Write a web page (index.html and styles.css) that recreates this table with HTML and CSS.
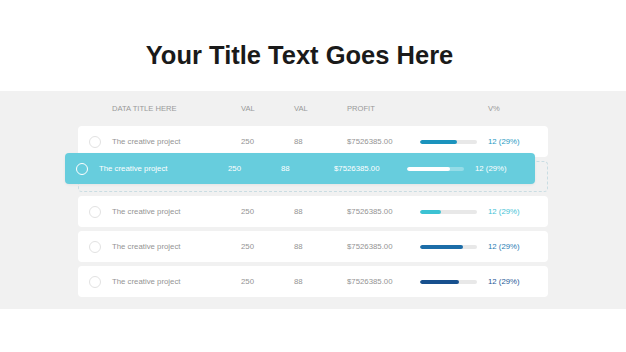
FILE: index.html
```html
<!DOCTYPE html>
<html>
<head>
<meta charset="utf-8">
<link rel="stylesheet" href="styles.css">
</head>
<body>
<header class="top">
  <h1 class="title">Your Title Text Goes Here</h1>
</header>
<section class="band">
  <div class="table">
    <div class="grid head">
      <span></span>
      <span>DATA TITLE HERE</span>
      <span>VAL</span>
      <span>VAL</span>
      <span>PROFIT</span>
      <span></span>
      <span>V%</span>
    </div>
    <div class="grid row">
      <span class="dot"></span>
      <span>The creative project</span>
      <span>250</span>
      <span>88</span>
      <span>$7526385.00</span>
      <span class="bar"><i class="fill c1" style="width:37px"></i></span>
      <span class="pct t1">12 (29%)</span>
    </div>
    <div class="slot">
      <div class="grid row drag">
        <span class="dot"></span>
        <span>The creative project</span>
        <span>250</span>
        <span>88</span>
        <span>$7526385.00</span>
        <span class="bar"><i class="fill" style="width:43px"></i></span>
        <span class="pct">12 (29%)</span>
      </div>
    </div>
    <div class="grid row">
      <span class="dot"></span>
      <span>The creative project</span>
      <span>250</span>
      <span>88</span>
      <span>$7526385.00</span>
      <span class="bar"><i class="fill c3" style="width:21px"></i></span>
      <span class="pct t3">12 (29%)</span>
    </div>
    <div class="grid row">
      <span class="dot"></span>
      <span>The creative project</span>
      <span>250</span>
      <span>88</span>
      <span>$7526385.00</span>
      <span class="bar"><i class="fill c4" style="width:43px"></i></span>
      <span class="pct t4">12 (29%)</span>
    </div>
    <div class="grid row">
      <span class="dot"></span>
      <span>The creative project</span>
      <span>250</span>
      <span>88</span>
      <span>$7526385.00</span>
      <span class="bar"><i class="fill c5" style="width:39px"></i></span>
      <span class="pct t5">12 (29%)</span>
    </div>
  </div>
</section>
</body>
</html>
```
FILE: styles.css
```css
* { box-sizing: border-box; }
html, body { margin: 0; padding: 0; background: #ffffff; }
body { width: 626px; height: 352px; overflow: hidden; font-family: "Liberation Sans", Arial, sans-serif; }

.top { height: 91px; padding-top: 40px; padding-right: 27px; text-align: center; }
.title { margin: 0; font-size: 25.5px; line-height: 30px; font-weight: bold; color: #1a1a1a; }

.band { background: #f1f1f1; height: 218px; padding-left: 78px; }
.table { width: 470px; display: flex; flex-direction: column; gap: 4px; }

.grid {
  display: grid;
  grid-template-columns: 34px 129px 53px 53px 73px 68px 1fr;
  align-items: center;
}
.grid > span { white-space: nowrap; }

.head { height: 31px; padding-top: 4px; font-size: 7.6px; color: #999999; }

.row { height: 31px; background: #ffffff; border-radius: 4px; font-size: 7.8px; color: #949494; }

.dot { width: 12px; height: 12px; margin-left: 11px; border: 1px solid #e2e2e2; border-radius: 50%; display: block; }

.bar { display: block; width: 57px; height: 4px; background: #e8e8e8; border-radius: 2px; overflow: hidden; }
.fill { display: block; height: 4px; border-radius: 2px; }
.c1 { background: #1b93bd; }
.c3 { background: #3cc2d3; }
.c4 { background: #1c6da8; }
.c5 { background: #17508e; }

.t1 { color: #2a9ac3; }
.t3 { color: #45c3d6; }
.t4 { color: #2b7cb3; }
.t5 { color: #1f5a97; }

.slot { position: relative; height: 31px; border: 1px dashed #c9dde3; border-radius: 4px; }
.drag {
  position: absolute;
  left: -14px;
  top: -9px;
  width: 470px;
  background: #67cddd;
  color: #ffffff;
  box-shadow: 0 1px 3px rgba(0, 0, 0, 0.06);
}
.drag .dot { border-color: #ffffff; }
.drag .bar { background: rgba(255, 255, 255, 0.3); }
.drag .fill { background: #ffffff; }
```
